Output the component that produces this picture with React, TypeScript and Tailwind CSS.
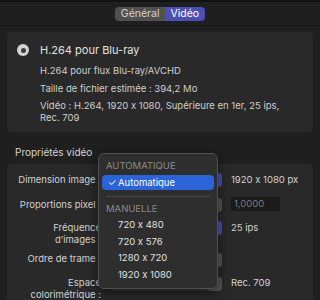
import React from "react";

function Popup({ blue }: { blue?: boolean }) {
  return (
    <div className="flex h-[14px] w-[112px] shrink-0 overflow-hidden rounded-[4px] bg-[#3b3b3b]">
      <div className="flex-1" />
      <div className={blue ? "w-[14px] bg-[#4b4fae]" : "w-[14px] bg-[#575757]"} />
    </div>
  );
}

export default function App() {
  return (
    <div
      className="relative h-[300px] w-[320px] overflow-hidden bg-[#1f1f1f] text-[#dcdcdc] [font-feature-settings:'calt'_0]"
      style={{ fontFamily: "Inter, 'Noto Sans', sans-serif" }}
    >
      {/* top bar */}
      <div className="flex h-[26px] items-start justify-center border-t-2 border-b border-t-[#121212] border-b-[#141414] pt-[5px]">
        <div className="flex h-[14px] overflow-hidden rounded-[4px] text-[10.5px] leading-[14px]">
          <div className="bg-[#505050] px-[5.5px] text-[#d4d4d4]">Général</div>
          <div className="bg-[#4b4fb2] px-[5.5px] text-white">Vidéo</div>
        </div>
      </div>

      <div className="px-[7px]">
        {/* summary panel */}
        <div className="mt-[6px] rounded-[5px] bg-[#292929] pb-[8px] pl-[10px] pt-[10px]">
          <div className="flex items-center gap-[11px]">
            <div className="flex h-[12px] w-[12px] items-center justify-center rounded-full bg-[#d4d4d4]">
              <div className="h-[5px] w-[5px] rounded-full bg-[#3c3c3c]" />
            </div>
            <div className="text-[11px] leading-[16px] text-[#e2e2e2]">H.264 pour Blu-ray</div>
          </div>
          <div className="mt-[4px] pl-[23px] text-[9.5px] text-[#cfcfcf]">
            <div className="leading-[18px]">H.264 pour flux Blu-ray/AVCHD</div>
            <div className="leading-[18px]">Taille de fichier estimée : 394,2 Mo</div>
            <div className="mt-[2px] whitespace-nowrap leading-[12px]">
              Vidéo : H.264, 1920 x 1080, Supérieure en 1er, 25 ips,
              <br />
              Rec. 709
            </div>
          </div>
        </div>

        {/* heading */}
        <div className="mb-[4px] mt-[12px] pl-[8px] text-[10px] leading-[16px] text-[#d6d6d6]">Propriétés vidéo</div>

        {/* properties panel */}
        <div className="h-[200px] rounded-[5px] bg-[#292929] pt-[9px] text-[9.5px] text-[#d2d2d2]">
          <div className="flex h-[24px] items-start">
            <div className="w-[94px] shrink-0 whitespace-nowrap text-right leading-[14px]">Dimension image :</div>
            <div className="ml-[9px]"><Popup blue /></div>
            <div className="ml-[9px] leading-[14px]">1920 x 1080 px</div>
          </div>
          <div className="flex h-[24px] items-start">
            <div className="mt-[1px] w-[94px] shrink-0 whitespace-nowrap text-right leading-[14px]">Proportions pixel :</div>
            <div className="ml-[9px] mt-[1px]"><Popup /></div>
            <div className="ml-[9px] h-[14px] w-[49px] bg-[#1a1a1a] pl-[3px] leading-[14px] text-[#7a7a7a]">1,0000</div>
          </div>
          <div className="flex h-[32px] items-start">
            <div className="mt-[1px] w-[94px] shrink-0 whitespace-nowrap text-right leading-[12px]">
              Fréquence
              <br />
              d’images :
            </div>
            <div className="ml-[9px]"><Popup blue /></div>
            <div className="ml-[9px] leading-[14px]">25 ips</div>
          </div>
          <div className="flex h-[24px] items-start">
            <div className="mt-[-1px] w-[94px] shrink-0 whitespace-nowrap text-right leading-[14px]">Ordre de trame :</div>
            <div className="ml-[9px]"><Popup /></div>
          </div>
          <div className="flex items-start">
            <div className="w-[94px] shrink-0 whitespace-nowrap text-right leading-[12px]">
              Espace
              <br />
              colorimétrique :
            </div>
            <div className="ml-[9px]"><Popup /></div>
            <div className="ml-[9px] leading-[12px]">Rec. 709</div>
          </div>
        </div>
      </div>

      {/* dropdown menu */}
      <div className="absolute left-[98px] top-[153px] w-[120px] rounded-[6px] border border-[#505050] bg-[#2e2e2e] pb-[5px] pt-[4px] text-[9.5px] shadow-[0_4px_12px_rgba(0,0,0,0.55)]">
        <div className="pl-[7px] leading-[16px] text-[#8a8a8a]">AUTOMATIQUE</div>
        <div className="mx-[3px] mt-[1px] flex h-[15px] items-center rounded-[4px] bg-[#2b63d9] pl-[6px] leading-[15px] text-white">
          <span className="w-[10px]">✓</span>
          <span>Automatique</span>
        </div>
        <div className="mx-[7px] mt-[6px] h-px bg-[#474747]" />
        <div className="mt-[4px] pl-[7px] leading-[16px] text-[#8a8a8a]">MANUELLE</div>
        <div className="pl-[19px] leading-[16.5px] text-[#e0e0e0]">720 x 480</div>
        <div className="pl-[19px] leading-[16.5px] text-[#e0e0e0]">720 x 576</div>
        <div className="pl-[19px] leading-[16.5px] text-[#e0e0e0]">1280 x 720</div>
        <div className="pl-[19px] leading-[16.5px] text-[#e0e0e0]">1920 x 1080</div>
      </div>
    </div>
  );
}
